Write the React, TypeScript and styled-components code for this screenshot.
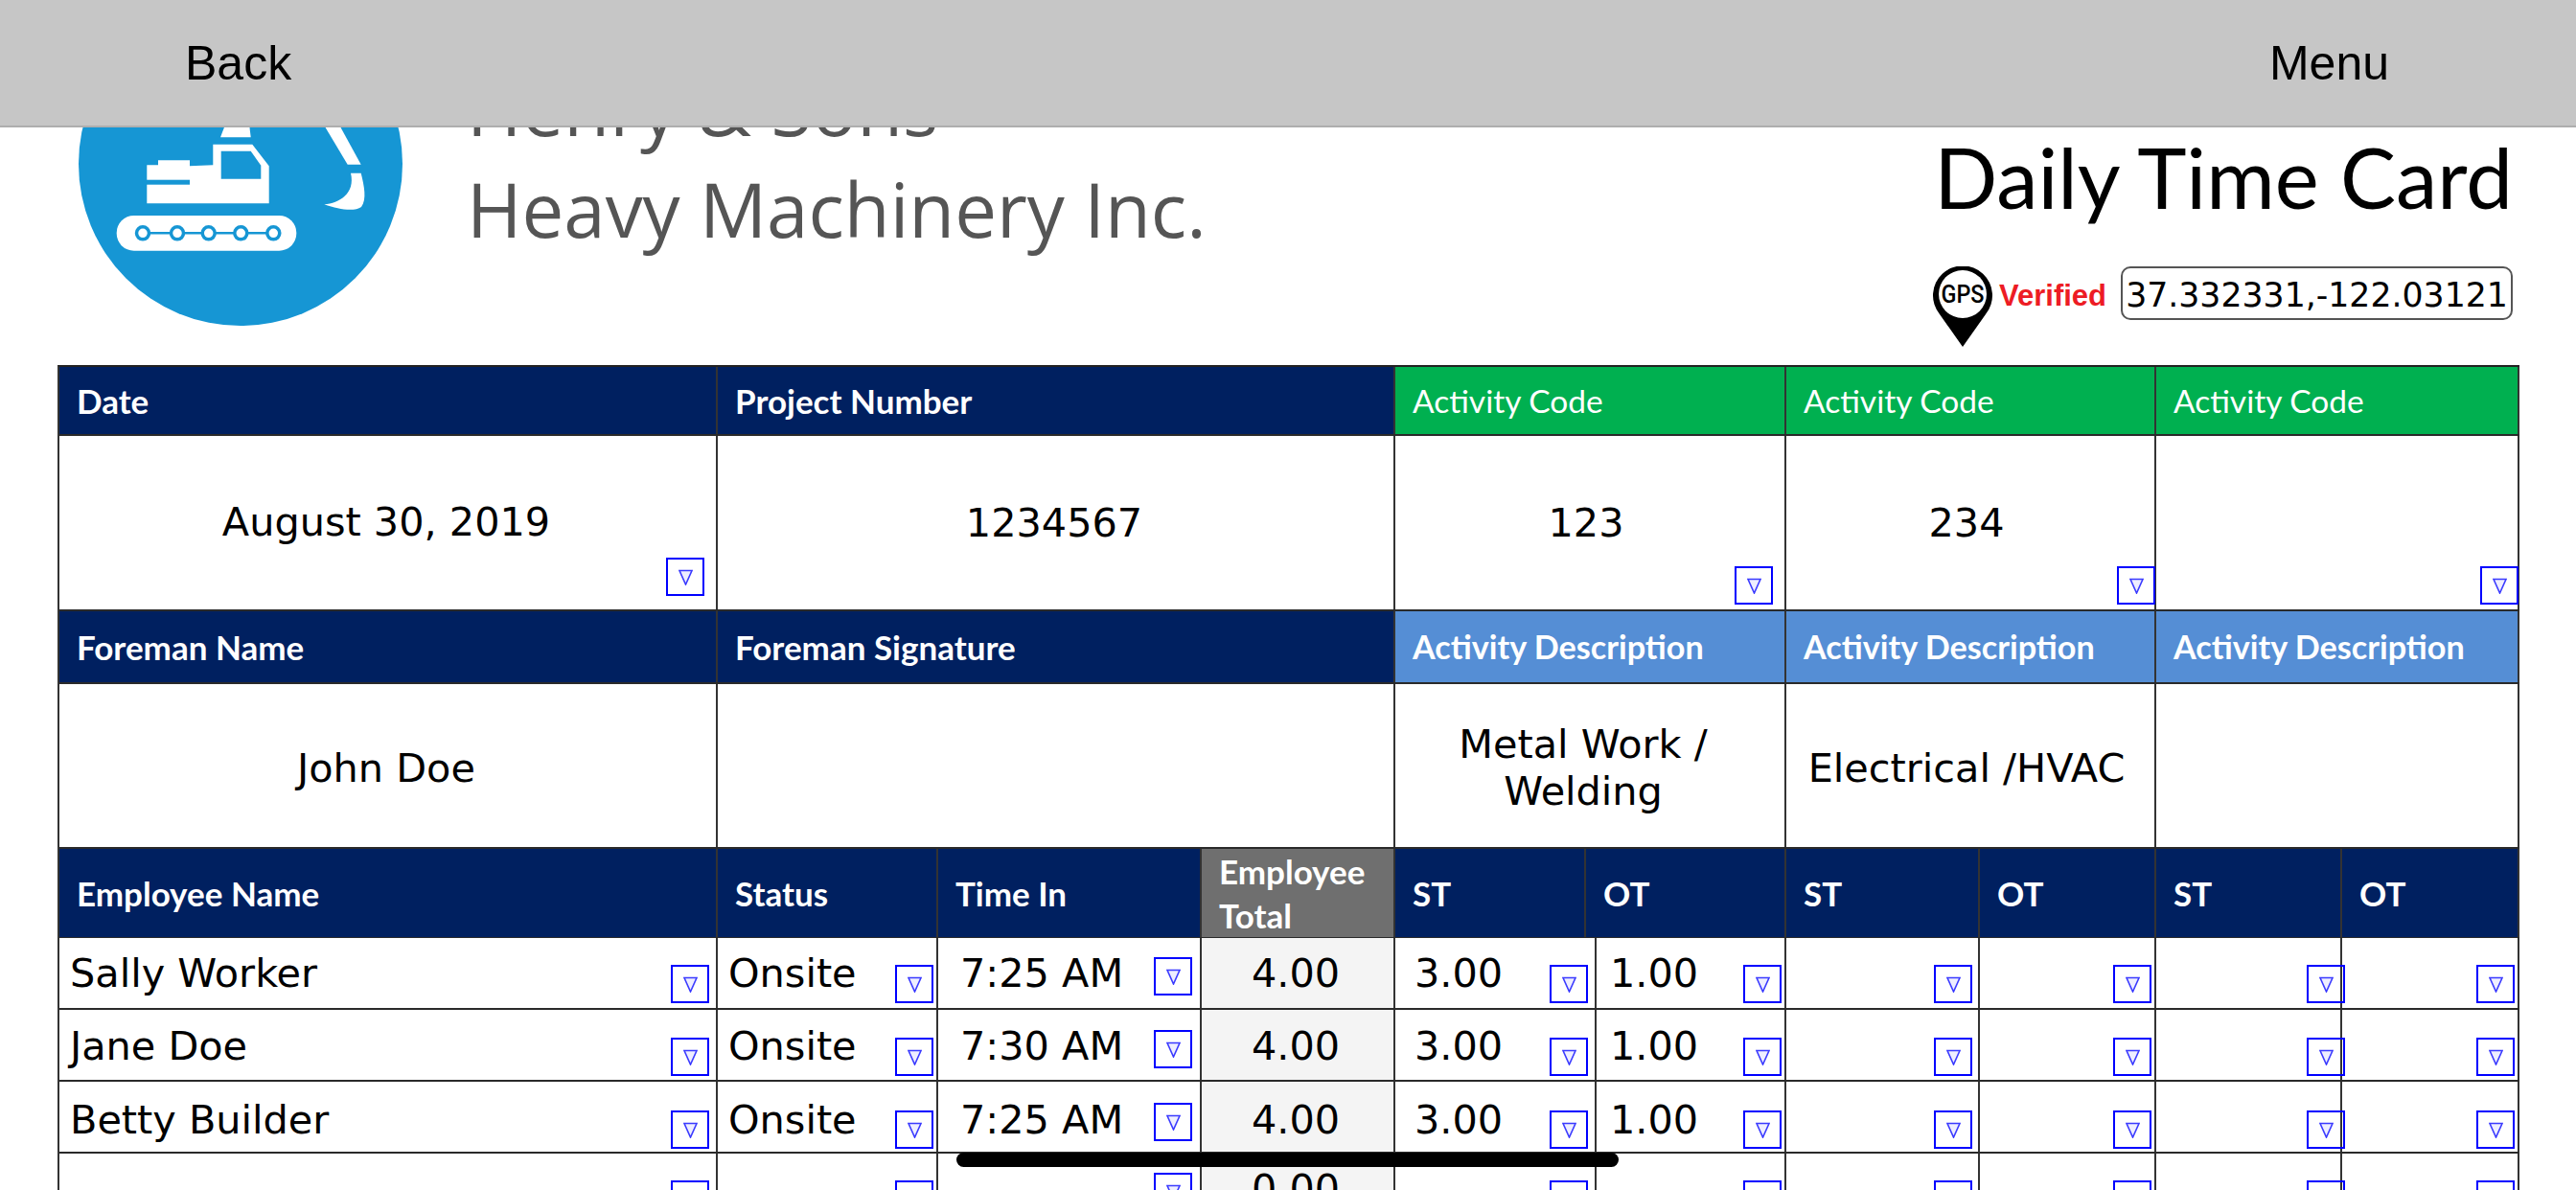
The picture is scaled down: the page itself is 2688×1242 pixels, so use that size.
import React from 'react';
import styled, { createGlobalStyle } from 'styled-components';

const GlobalStyle = createGlobalStyle`
  html, body {
    margin: 0;
    height: 100%;
    overflow: hidden;
    background: #fff;
  }
  * {
    box-sizing: border-box;
  }
`;

const Page = styled.div`
  width: 2688px;
  height: 1242px;
  overflow: hidden;
  background: #fff;
  font-family: 'DejaVu Sans', sans-serif;
`;

const TopBar = styled.div`
  position: fixed;
  top: 0;
  left: 0;
  right: 0;
  z-index: 5;
  height: 133px;
  padding: 0 195px 0 193px;
  display: flex;
  align-items: center;
  justify-content: space-between;
  background: #c6c6c6;
  border-bottom: 2px solid #aeaeae;
  font-family: 'Liberation Sans', Arial, sans-serif;
  font-size: 50px;
  color: #000;
`;

const HomeBar = styled.div`
  position: fixed;
  left: 998px;
  bottom: 24px;
  z-index: 5;
  width: 691px;
  height: 15px;
  border-radius: 8px;
  background: #000;
`;

const Header = styled.header`
  height: 381px;
  padding: 0 66px 0 82px;
  display: flex;
  justify-content: space-between;
`;

const Brand = styled.div`
  display: flex;
  gap: 67px;
`;

const LogoMark = styled.svg`
  display: block;
  width: 338px;
  height: 338px;
  margin-top: 2px;
`;

const Company = styled.div`
  margin-top: 59px;
  font-family: 'Open Sans', sans-serif;
  font-size: 78px;
  line-height: 106px;
  color: #555;
`;

const Stamp = styled.div`
  display: flex;
  flex-direction: column;
  align-items: flex-end;
`;

const Title = styled.h1`
  margin: 135px 0 0 0;
  font-family: Lato, sans-serif;
  font-weight: 400;
  font-size: 87px;
  line-height: 100px;
  color: #000;
`;

const GpsRow = styled.div`
  margin-top: 43px;
  display: flex;
  align-items: flex-start;
`;

const Pin = styled.svg`
  display: block;
  width: 62px;
  height: 85px;
`;

const Verified = styled.span`
  margin: 13px 15px 0 7px;
  font-family: 'Liberation Sans', Arial, sans-serif;
  font-weight: 700;
  font-size: 31px;
  line-height: 36px;
  color: #ed1c24;
`;

const Coords = styled.div`
  width: 409px;
  height: 56px;
  padding-top: 3px;
  display: flex;
  align-items: center;
  justify-content: center;
  border: 2px solid #555;
  border-radius: 10px;
  font-size: 34.7px;
  color: #000;
`;

const Table = styled.div`
  width: 2569px;
  margin-left: 60px;
  border-top: 2px solid #222;
  border-left: 2px solid #333;
`;

const Row = styled.div<{ $cols: number[]; $height: number }>`
  display: grid;
  grid-template-columns: ${p => p.$cols.map(c => `${c}px`).join(' ')};
  height: ${p => p.$height}px;
  border-bottom: 2px solid #2a2a2a;
`;

const headColors = {
  navy: '#002060',
  green: '#00b050',
  blue: '#558ed5',
  gray: '#6f6f6f',
};

const HeadCell = styled.div<{ $tone?: keyof typeof headColors; $light?: boolean }>`
  padding-left: 18px;
  display: flex;
  align-items: center;
  background: ${p => headColors[p.$tone || 'navy']};
  border-right: 2px solid #333;
  font-family: Lato, sans-serif;
  font-weight: ${p => (p.$light ? 400 : 700)};
  font-size: ${p => (p.$light ? 33.5 : p.$tone === 'blue' ? 34.2 : 35)}px;
  line-height: 46px;
  color: #fff;
`;

const ValueCell = styled.div<{ $padRight?: number; $padTop?: number }>`
  position: relative;
  padding: ${p => p.$padTop || 0}px ${p => p.$padRight ?? 8}px 0 0;
  display: flex;
  align-items: center;
  justify-content: center;
  text-align: center;
  border-right: 2px solid #333;
  font-size: 41.4px;
  line-height: 49px;
  color: #000;
`;

const DataCell = styled.div<{ $inset: number; $total?: boolean; $nudge: number }>`
  position: relative;
  padding: ${p => p.$nudge}px ${p => (p.$total ? 4 : 0)}px 0 ${p => p.$inset}px;
  display: flex;
  align-items: center;
  justify-content: ${p => (p.$total ? 'center' : 'flex-start')};
  background: ${p => (p.$total ? '#f4f4f4' : '#fff')};
  border-right: 2px solid #333;
  font-size: 41.4px;
  color: #000;
`;

const DropBox = styled.div<{ $right: number; $bottom: number }>`
  position: absolute;
  right: ${p => p.$right}px;
  bottom: ${p => p.$bottom}px;
  z-index: 1;
  width: 40px;
  height: 40px;
  display: flex;
  align-items: center;
  justify-content: center;
  background: transparent;
  border: solid #0000ff;
  border-width: 2px 2.5px;
`;

const Arrow = styled.svg`
  display: block;
  width: 15px;
  height: 17px;
`;

const Drop = ({ right, bottom }: { right: number; bottom: number }) => (
  <DropBox $right={right} $bottom={bottom}>
    <Arrow viewBox="0 0 15 17">
      <polygon points="1,1.5 14,1.5 7.5,16" fill="#eeeeff" stroke="#3b3bff" strokeWidth="1.6" />
    </Arrow>
  </DropBox>
);

const Logo = () => (
  <LogoMark viewBox="0 0 338 338">
    <circle cx="169" cy="169" r="169" fill="#1696d4" />
    <path d="M148 141.3 L160 110 H176 L179.7 141.3 Z" fill="#fff" />
    <path d="M245 110 H262 L294.7 169.7 H280.7 Z" fill="#fff" />
    <path
      d="M284 178.7 H294.7 C298 192 301 206 295 214 C288 219 272 217 256.3 211.3 C272 210 289 200 284 178.7 Z"
      fill="#fff"
    />
    <path
      d="M71.3 170.3 H83 V165.3 H116 V171.3 L140.3 170.3 V148.7 H181.3 L198.7 171.3 V210.3 H71.3 Z"
      fill="#fff"
    />
    <path d="M148.7 155.7 H179.7 L190.3 170.7 V184.7 H148.7 Z" fill="#1696d4" />
    <rect x="71" y="185.7" width="45" height="5" fill="#1696d4" />
    <rect x="39.7" y="223" width="187.6" height="36.7" rx="18" fill="#fff" />
    <line x1="67" y1="241.3" x2="203.3" y2="241.3" stroke="#1696d4" strokeWidth="2.5" />
    {[67, 103, 135.7, 169.3, 203.3].map(x => (
      <circle key={x} cx={x} cy="241.3" r="6.5" fill="#fff" stroke="#1696d4" strokeWidth="3.5" />
    ))}
  </LogoMark>
);

const GpsPin = () => (
  <Pin viewBox="0 0 62 85">
    <path d="M31 84 L7 50 A31 31 0 1 1 55 50 Z" fill="#000" />
    <circle cx="31" cy="29" r="25" fill="#fff" />
    <text
      x="31"
      y="38"
      textAnchor="middle"
      textLength="45"
      lengthAdjust="spacingAndGlyphs"
      fontFamily="Roboto, sans-serif"
      fontWeight="500"
      fontSize="25"
      fill="#000"
    >
      GPS
    </text>
  </Pin>
);

const topCols = [687, 707, 408, 386, 379];
const headCols = [687, 230, 275, 202, 199, 209, 202, 184, 194, 185];
const dataCols = [687, 230, 275, 202, 210, 198, 202, 184, 194, 185];

// x inset of the text and offset of the dropdown for each data column
const dataLayout = [
  { inset: 11, right: 7, bottom: 5 },
  { inset: 11, right: 3, bottom: 5 },
  { inset: 23, right: 8, bottom: 13 },
  { inset: 0, total: true },
  { inset: 20, right: 7, bottom: 5 },
  { inset: 14, right: 3, bottom: 5 },
  { inset: 14, right: 6, bottom: 5 },
  { inset: 14, right: 3, bottom: 5 },
  { inset: 14, right: -5, bottom: 5 },
  { inset: 14, right: 3, bottom: 5 },
];

// the contents drift a little against the row lines in the source sheet
const rowDrift = [0, 1, 2, 0];

const employees = [
  ['Sally Worker', 'Onsite', '7:25 AM', '4.00', '3.00', '1.00', '', '', '', ''],
  ['Jane Doe', 'Onsite', '7:30 AM', '4.00', '3.00', '1.00', '', '', '', ''],
  ['Betty Builder', 'Onsite', '7:25 AM', '4.00', '3.00', '1.00', '', '', '', ''],
  ['', '', '', '0.00', '', '', '', '', '', ''],
];

export default function App() {
  return (
    <Page>
      <GlobalStyle />
      <TopBar>
        <span>Back</span>
        <span>Menu</span>
      </TopBar>

      <Header>
        <Brand>
          <Logo />
          <Company>
            Henry &amp; Sons
            <br />
            Heavy Machinery Inc.
          </Company>
        </Brand>
        <Stamp>
          <Title>Daily Time Card</Title>
          <GpsRow>
            <GpsPin />
            <Verified>Verified</Verified>
            <Coords>37.332331,-122.03121</Coords>
          </GpsRow>
        </Stamp>
      </Header>

      <Table>
        <Row $cols={topCols} $height={72}>
          <HeadCell>Date</HeadCell>
          <HeadCell>Project Number</HeadCell>
          <HeadCell $tone="green" $light>Activity Code</HeadCell>
          <HeadCell $tone="green" $light>Activity Code</HeadCell>
          <HeadCell $tone="green" $light>Activity Code</HeadCell>
        </Row>
        <Row $cols={topCols} $height={183}>
          <ValueCell $padRight={3}>
            August 30, 2019
            <Drop right={12} bottom={14} />
          </ValueCell>
          <ValueCell $padRight={3} $padTop={2}>1234567</ValueCell>
          <ValueCell $padTop={1}>
            123
            <Drop right={12} bottom={5} />
          </ValueCell>
          <ValueCell $padTop={1}>
            234
            <Drop right={-1} bottom={5} />
          </ValueCell>
          <ValueCell>
            <Drop right={-1} bottom={5} />
          </ValueCell>
        </Row>
        <Row $cols={topCols} $height={76}>
          <HeadCell>Foreman Name</HeadCell>
          <HeadCell>Foreman Signature</HeadCell>
          <HeadCell $tone="blue">Activity Description</HeadCell>
          <HeadCell $tone="blue">Activity Description</HeadCell>
          <HeadCell $tone="blue">Activity Description</HeadCell>
        </Row>
        <Row $cols={topCols} $height={172}>
          <ValueCell $padRight={3} $padTop={6}>John Doe</ValueCell>
          <ValueCell />
          <ValueCell $padRight={14} $padTop={6}>
            Metal Work /<br />
            Welding
          </ValueCell>
          <ValueCell $padTop={6}>Electrical /HVAC</ValueCell>
          <ValueCell />
        </Row>
        <Row $cols={headCols} $height={93}>
          <HeadCell>Employee Name</HeadCell>
          <HeadCell>Status</HeadCell>
          <HeadCell>Time In</HeadCell>
          <HeadCell $tone="gray">
            Employee
            <br />
            Total
          </HeadCell>
          {['ST', 'OT', 'ST', 'OT', 'ST', 'OT'].map((label, i) => (
            <HeadCell key={i}>{label}</HeadCell>
          ))}
        </Row>
        {employees.map((cells, r) => (
          <Row key={r} $cols={dataCols} $height={75}>
            {cells.map((value, c) => {
              const layout = dataLayout[c];
              return (
                <DataCell key={c} $inset={layout.inset} $total={layout.total} $nudge={rowDrift[r] * 3}>
                  {value}
                  {!layout.total && <Drop right={layout.right!} bottom={layout.bottom! - rowDrift[r]} />}
                </DataCell>
              );
            })}
          </Row>
        ))}
      </Table>

      <HomeBar />
    </Page>
  );
}
